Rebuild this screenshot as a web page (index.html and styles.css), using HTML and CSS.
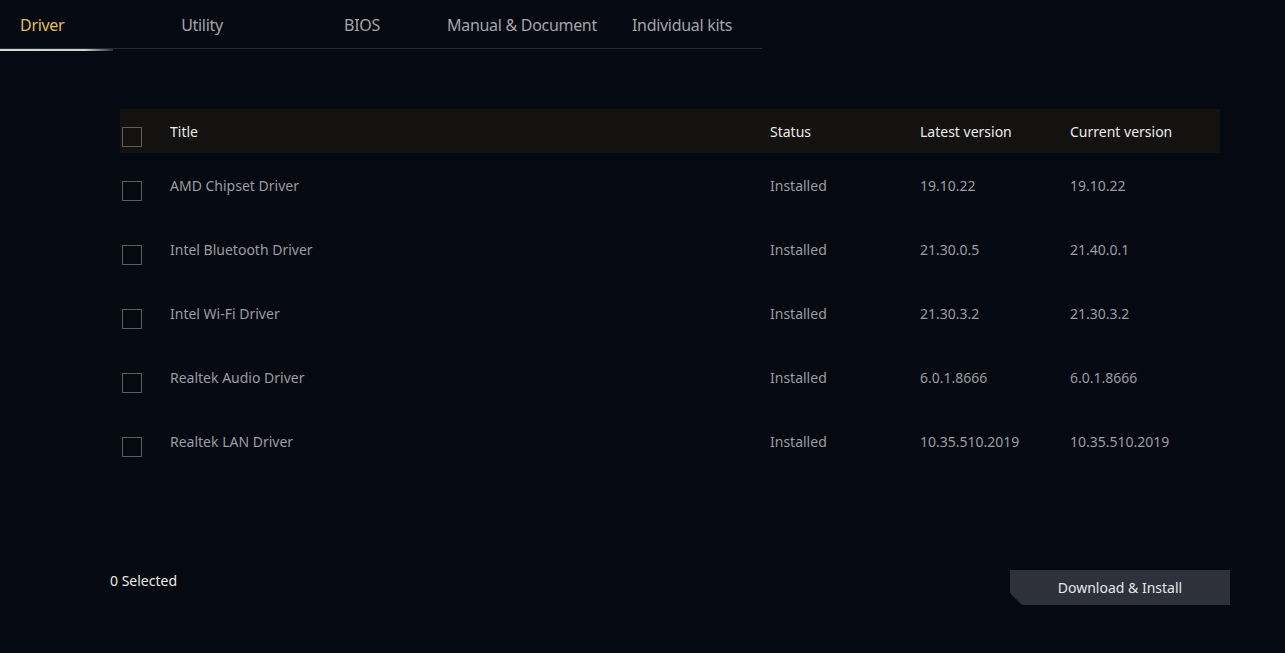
FILE: index.html
```html
<!DOCTYPE html>
<html lang="en">
<head>
<meta charset="utf-8">
<title>Driver</title>
<link rel="stylesheet" href="styles.css">
</head>
<body>
<div class="page">
  <nav class="tabs">
    <div class="tab tab-first active">Driver</div>
    <div class="tab">Utility</div>
    <div class="tab">BIOS</div>
    <div class="tab">Manual &amp; Document</div>
    <div class="tab">Individual kits</div>
  </nav>

  <section class="table">
    <div class="row head">
      <span class="check"></span>
      <span class="c-title">Title</span>
      <span class="c-status">Status</span>
      <span class="c-ver">Latest version</span>
      <span class="c-ver">Current version</span>
    </div>
    <div class="row">
      <span class="check"></span>
      <span class="c-title">AMD Chipset Driver</span>
      <span class="c-status">Installed</span>
      <span class="c-ver">19.10.22</span>
      <span class="c-ver">19.10.22</span>
    </div>
    <div class="row">
      <span class="check"></span>
      <span class="c-title">Intel Bluetooth Driver</span>
      <span class="c-status">Installed</span>
      <span class="c-ver">21.30.0.5</span>
      <span class="c-ver">21.40.0.1</span>
    </div>
    <div class="row">
      <span class="check"></span>
      <span class="c-title">Intel Wi-Fi Driver</span>
      <span class="c-status">Installed</span>
      <span class="c-ver">21.30.3.2</span>
      <span class="c-ver">21.30.3.2</span>
    </div>
    <div class="row">
      <span class="check"></span>
      <span class="c-title">Realtek Audio Driver</span>
      <span class="c-status">Installed</span>
      <span class="c-ver">6.0.1.8666</span>
      <span class="c-ver">6.0.1.8666</span>
    </div>
    <div class="row">
      <span class="check"></span>
      <span class="c-title">Realtek LAN Driver</span>
      <span class="c-status">Installed</span>
      <span class="c-ver">10.35.510.2019</span>
      <span class="c-ver">10.35.510.2019</span>
    </div>
  </section>

  <footer class="footer">
    <span class="count">0 Selected</span>
    <button class="install">Download &amp; Install</button>
  </footer>
</div>
</body>
</html>
```
FILE: styles.css
```css
html, body {
  margin: 0;
  height: 100%;
  background: #050a12;
}

body {
  font-family: "Noto Sans", "Open Sans", sans-serif;
  color: #9a9ca0;
}

.page {
  display: flex;
  flex-direction: column;
  height: 653px;
}

/* tab strip */
.tabs {
  display: grid;
  grid-template-columns: 122px repeat(4, 160px);
  width: 762px;
  height: 48px;
  border-bottom: 1px solid #262a31;
}

.tab {
  position: relative;
  font-size: 16px;
  line-height: 50px;
  text-align: center;
  color: #a3a5a9;
  letter-spacing: -0.3px;
}

.tab-first {
  text-align: left;
  padding-left: 20px;
}

.tab.active {
  color: #e4bc5a;
}

.tab.active::after {
  content: "";
  position: absolute;
  left: 0;
  bottom: -1px;
  width: 113px;
  height: 2px;
  background: linear-gradient(to right, #d8d8d8 0%, #d0d0d0 75%, rgba(200, 200, 200, 0.2) 100%);
}

/* driver table */
.table {
  margin: 60px 65px 0 120px;
}

.row {
  display: flex;
  align-items: center;
  height: 64px;
  font-size: 14px;
}

.row.head {
  height: 44px;
  background: #131211;
  color: #eceae6;
}

.check {
  box-sizing: border-box;
  flex: none;
  width: 20px;
  height: 20px;
  margin-left: 2px;
  margin-top: 11px;
  border: 1px solid #5c5d5f;
}

.c-title {
  width: 600px;
  margin-left: 28px;
}

.c-status {
  width: 150px;
}

.c-ver {
  width: 150px;
}

/* bottom bar */
.footer {
  display: flex;
  align-items: flex-start;
  justify-content: space-between;
  margin: auto 55px 48px 110px;
}

.count {
  font-size: 14px;
  color: #eceae6;
  margin-top: -10px;
}

.install {
  width: 220px;
  height: 35px;
  margin-top: -11px;
  border: 0;
  padding: 0;
  font-family: inherit;
  font-size: 14px;
  color: #e4e6ea;
  background: #2e313a;
  clip-path: polygon(0 0, 100% 0, 100% 100%, 12px 100%, 0 calc(100% - 12px));
}
```
